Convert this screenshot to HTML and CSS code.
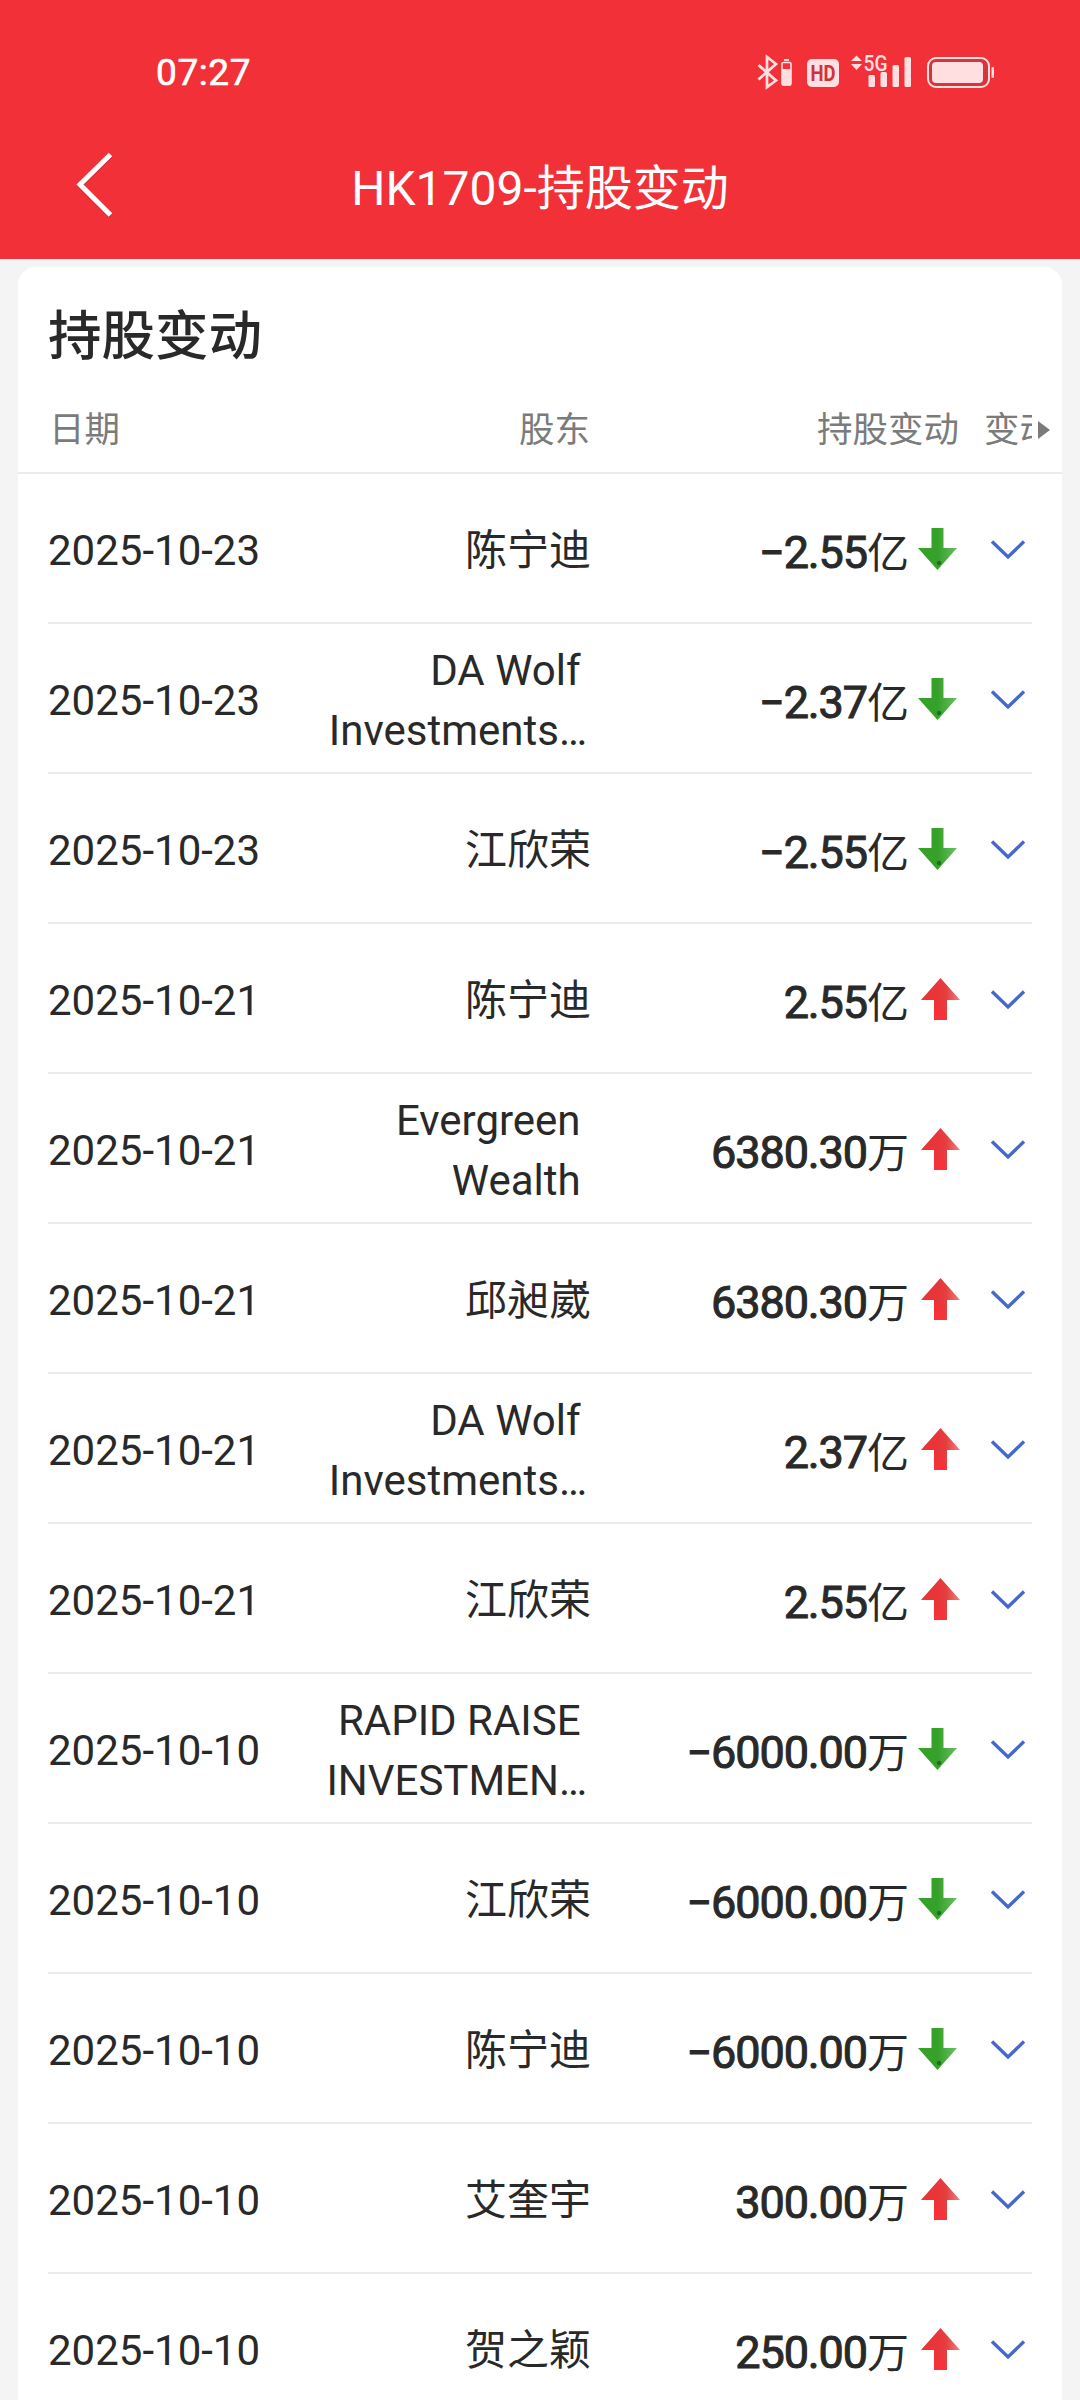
FILE: index.html
```html
<!DOCTYPE html>
<html lang="zh-CN">
<head>
  <meta charset="utf-8" />
  <title>HK1709-持股变动</title>
  <meta name="viewport" content="width=device-width, initial-scale=1.0" />
  <link rel="stylesheet" href="styles.css">
</head>
<body>
  <!-- 图标 -->
  <svg class="sprite" width="0" height="0">
    <defs>
      <linearGradient id="green" x1="0" y1="0" x2="1" y2="0">
        <stop offset="0.5" stop-color="#35a128" />
        <stop offset="1" stop-color="#6cbd65" />
      </linearGradient>
      <linearGradient id="red" x1="0" y1="0" x2="1" y2="0">
        <stop offset="0.4" stop-color="#e93438" />
        <stop offset="0.65" stop-color="#e3403f" />
        <stop offset="1" stop-color="#f07f7f" />
      </linearGradient>
      <linearGradient id="red-stem" x1="0" y1="0" x2="0" y2="1">
        <stop offset="0" stop-color="#fb3038" stop-opacity="0" />
        <stop offset="1" stop-color="#fb3038" />
      </linearGradient>
    </defs>
    <symbol id="down" viewBox="0 0 39 42">
      <path fill="url(#green)" d="M13.5 0h12v20H39L19.500 42 0 20h13.500z" />
      <circle cx="21" cy="35" r="2.200" fill="#1d6f1c" />
    </symbol>
    <symbol id="up" viewBox="0 0 39 42">
      <path fill="url(#red)" d="M19.500 0 39 22H26v20H13V22H0z" />
      <path fill="url(#red-stem)" d="M13 22h11v20H13z" />
    </symbol>
    <symbol id="more" viewBox="0 0 36 22">
      <path fill="none" stroke="#4468cc" stroke-width="3.400" d="M2 2.500 18 18 34 2.500" />
    </symbol>
  </svg>

  <header class="header">
    <div class="status-bar">
      <span class="time">07:27</span>
      <div class="status-icons">
        <svg class="bluetooth" width="36" height="40" viewBox="757 52 36 40">
          <path fill="none" stroke="#ffdfe0" stroke-width="2.700" d="M752 65M758.500 65 776 80.500 767 87V57l9 7-17.500 15.500" />
          <rect x="784" y="59" width="5" height="2" fill="#ffdfe0" />
          <rect x="782" y="62.500" width="9" height="22.500" rx="1.500" fill="none" stroke="#ffdfe0" stroke-width="1.600" />
          <rect x="782" y="69" width="9" height="16.500" fill="#ffdfe0" />
        </svg>
        <svg class="hd" width="32" height="40" viewBox="807 52 32 40">
          <rect x="807" y="59" width="32" height="28" rx="5" fill="#ffdfe0" />
          <text x="823" y="81" text-anchor="middle" textLength="25" lengthAdjust="spacingAndGlyphs">HD</text>
        </svg>
        <svg class="signal" width="62" height="40" viewBox="850 52 62 40">
          <path fill="#ffdfe0" d="M856.500 55.500l5.500 5.500h-11zM856.500 70l5.500-6h-11z" />
          <text x="863.500" y="70.500" textLength="24" lengthAdjust="spacingAndGlyphs">5G</text>
          <rect x="868.500" y="75" width="6.500" height="12" rx="1.500" />
          <rect x="880.500" y="72" width="6.500" height="15" rx="1.500" />
          <rect x="892.500" y="65" width="6.500" height="22" rx="1.500" />
          <rect x="904.500" y="57" width="6.500" height="30" rx="1.500" />
        </svg>
        <svg class="battery" width="68" height="40" viewBox="927 52 68 40">
          <rect x="928" y="58" width="61" height="29" rx="8" fill="#d5353c" stroke="#ffdfe0" stroke-width="2" />
          <rect x="932" y="62" width="51" height="21" rx="4" fill="#ffdfe0" />
          <rect x="991.500" y="67" width="2.500" height="11" rx="1" fill="#ffdfe0" />
        </svg>
      </div>
    </div>
    <div class="nav-bar">
      <svg class="back" width="42" height="70" viewBox="0 0 42 70">
        <path fill="none" stroke="#b4242b" stroke-opacity="0.5" stroke-width="4.500" d="M37.500 4.500 7 34l30.500 30.500" />
        <path fill="none" stroke="#fff" stroke-width="5" d="M37.500 2.500 7 32.500l30.500 30.500" />
      </svg>
      <h1>HK1709-持股变动</h1>
    </div>
  </header>

  <main class="card">
    <h2>持股变动</h2>
    <div class="table-head">
      <span>日期</span>
      <span class="right">股东</span>
      <span class="right">持股变动</span>
      <span class="clipped">变动</span>
      <svg class="scroll-hint" width="12" height="18" viewBox="0 0 12 18"><path fill="#7b7b7b" d="M0 0l12 9-12 9z" /></svg>
    </div>

    <div class="row">
      <span class="date">2025-10-23</span>
      <span class="name">陈宁迪</span>
      <span class="amount">−2.55<i>亿</i></span>
      <svg class="arrow down"><use href="#down" /></svg>
      <svg class="more"><use href="#more" /></svg>
    </div>
    <div class="row">
      <span class="date">2025-10-23</span>
      <span class="name">DA Wolf&nbsp;<br><span class="cut">Investments…</span></span>
      <span class="amount">−2.37<i>亿</i></span>
      <svg class="arrow down"><use href="#down" /></svg>
      <svg class="more"><use href="#more" /></svg>
    </div>
    <div class="row">
      <span class="date">2025-10-23</span>
      <span class="name">江欣荣</span>
      <span class="amount">−2.55<i>亿</i></span>
      <svg class="arrow down"><use href="#down" /></svg>
      <svg class="more"><use href="#more" /></svg>
    </div>
    <div class="row">
      <span class="date">2025-10-21</span>
      <span class="name">陈宁迪</span>
      <span class="amount">2.55<i>亿</i></span>
      <svg class="arrow up"><use href="#up" /></svg>
      <svg class="more"><use href="#more" /></svg>
    </div>
    <div class="row">
      <span class="date">2025-10-21</span>
      <span class="name">Evergreen&nbsp;<br>Wealth&nbsp;</span>
      <span class="amount">6380.30<i>万</i></span>
      <svg class="arrow up"><use href="#up" /></svg>
      <svg class="more"><use href="#more" /></svg>
    </div>
    <div class="row">
      <span class="date">2025-10-21</span>
      <span class="name">邱昶崴</span>
      <span class="amount">6380.30<i>万</i></span>
      <svg class="arrow up"><use href="#up" /></svg>
      <svg class="more"><use href="#more" /></svg>
    </div>
    <div class="row">
      <span class="date">2025-10-21</span>
      <span class="name">DA Wolf&nbsp;<br><span class="cut">Investments…</span></span>
      <span class="amount">2.37<i>亿</i></span>
      <svg class="arrow up"><use href="#up" /></svg>
      <svg class="more"><use href="#more" /></svg>
    </div>
    <div class="row">
      <span class="date">2025-10-21</span>
      <span class="name">江欣荣</span>
      <span class="amount">2.55<i>亿</i></span>
      <svg class="arrow up"><use href="#up" /></svg>
      <svg class="more"><use href="#more" /></svg>
    </div>
    <div class="row">
      <span class="date">2025-10-10</span>
      <span class="name">RAPID RAISE&nbsp;<br><span class="cut">INVESTMEN…</span></span>
      <span class="amount">−6000.00<i>万</i></span>
      <svg class="arrow down"><use href="#down" /></svg>
      <svg class="more"><use href="#more" /></svg>
    </div>
    <div class="row">
      <span class="date">2025-10-10</span>
      <span class="name">江欣荣</span>
      <span class="amount">−6000.00<i>万</i></span>
      <svg class="arrow down"><use href="#down" /></svg>
      <svg class="more"><use href="#more" /></svg>
    </div>
    <div class="row">
      <span class="date">2025-10-10</span>
      <span class="name">陈宁迪</span>
      <span class="amount">−6000.00<i>万</i></span>
      <svg class="arrow down"><use href="#down" /></svg>
      <svg class="more"><use href="#more" /></svg>
    </div>
    <div class="row">
      <span class="date">2025-10-10</span>
      <span class="name">艾奎宇</span>
      <span class="amount">300.00<i>万</i></span>
      <svg class="arrow up"><use href="#up" /></svg>
      <svg class="more"><use href="#more" /></svg>
    </div>
    <div class="row">
      <span class="date">2025-10-10</span>
      <span class="name">贺之颖</span>
      <span class="amount">250.00<i>万</i></span>
      <svg class="arrow up"><use href="#up" /></svg>
      <svg class="more"><use href="#more" /></svg>
    </div>
  </main>
</body>
</html>
```

FILE: styles.css
```css
* {
  margin: 0;
  padding: 0;
  box-sizing: border-box;
}

body {
  font-family: Roboto, 'Noto Sans CJK SC', sans-serif;
  background: #f4f4f4;
  color: #292929;
  height: 2400px;
  overflow: hidden;
}

svg {
  display: block;
}

.header {
  height: 259px;
  background: #f23038;
  color: #fff;
}

/* 状态栏 */
.status-bar {
  height: 112px;
  padding: 32px 85px 0 156px;
  display: flex;
  justify-content: space-between;
  align-items: center;
}

.time {
  padding-top: 2px;
  font-size: 37px;
  line-height: 40px;
  letter-spacing: 0.6px;
  -webkit-text-stroke: 0.6px #fff;
}

.status-icons {
  display: flex;
}

.hd {
  margin-left: 14px;
}

.hd text {
  font-size: 22px;
  font-weight: 700;
  fill: #cb343b;
}

.signal {
  margin-left: 11px;
  fill: #ffdfe0;
}

.signal text {
  font-size: 21.5px;
  font-weight: 500;
}

.battery {
  margin-left: 15px;
}

/* 标题栏 */
.nav-bar {
  height: 147px;
  padding: 0 73px;
  display: grid;
  grid-template-columns: 42px 1fr 42px;
  align-items: start;
}

.back {
  margin-top: 40px;
}

h1 {
  margin-top: 45px;
  text-align: center;
  font-size: 48px;
  font-weight: 400;
  line-height: 63px;
}

/* 持股变动列表 */
.card {
  margin: 8px 18px 0;
  background: #fff;
  border-radius: 18px 18px 0 0;
}

h2 {
  height: 117px;
  padding: 30px 30px 0;
  font-size: 53.5px;
  font-weight: 500;
  line-height: 80px;
}

.table-head {
  height: 90px;
  padding: 4px 12px 0 31px;
  border-bottom: 2px solid #ebebeb;
  display: grid;
  grid-template-columns: 200px 341px 369px 25px 48px 6px 12px;
  align-items: center;
  font-size: 35.5px;
  line-height: 50px;
  color: #7b7b7b;
}

.right {
  text-align: right;
}

.clipped {
  grid-column: 5;
  overflow: hidden;
  white-space: nowrap;
}

.scroll-hint {
  grid-column: 7;
}

.row {
  height: 150px;
  margin: 0 30px;
  padding-top: 6px;
  border-bottom: 2px solid #ebebeb;
  display: grid;
  grid-template-columns: 200px 343px 318px 53px 70px;
  align-items: center;
  font-size: 42px;
  line-height: 60px;
}

.date {
  white-space: nowrap;
}

.name {
  text-align: right;
  white-space: nowrap;
}

.cut {
  padding-right: 4px;
}

.amount {
  padding-top: 5px;
  text-align: right;
  font-size: 45px;
  letter-spacing: -1.1px;
  -webkit-text-stroke: 1px #292929;
}

.amount i {
  font-size: 42px;
  font-style: normal;
  letter-spacing: 0;
  -webkit-text-stroke: 0;
}

.arrow {
  width: 39px;
  height: 42px;
  margin-top: -4px;
}

.arrow.down {
  margin-left: 9px;
}

.arrow.up {
  margin-left: 12px;
}

.more {
  width: 36px;
  height: 22px;
  margin: -3px 0 0 28px;
}

/* 只存放图标定义，不占位置 */
.sprite {
  position: absolute;
}
```
